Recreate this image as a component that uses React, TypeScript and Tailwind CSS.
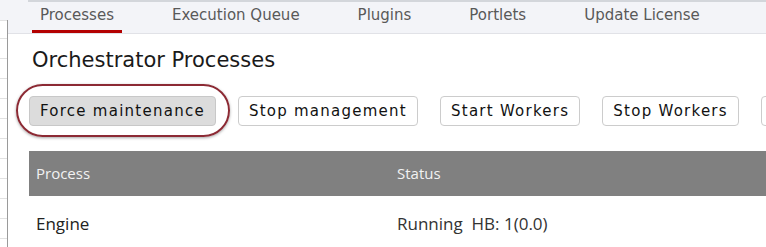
import React from "react";

const tabs = ["Processes", "Execution Queue", "Plugins", "Portlets", "Update License"];
const buttons = ["Force maintenance", "Stop management", "Start Workers", "Stop Workers"];

export default function App() {
  return (
    <div className="relative w-[766px] h-[247px] overflow-hidden bg-white flex" style={{ fontFamily: '"DejaVu Sans", Verdana, sans-serif' }}>
      {/* left strip */}
      <div className="w-[8px] shrink-0 flex flex-col">
        <div className="h-[20px] bg-[#f3f4f8] shrink-0" />
        <div className="flex-1 bg-white border-r border-[#9a9a9a] flex flex-col">
          <div className="h-[18px] border-t border-[#e2e2e2] shrink-0" />
          {Array.from({ length: 11 }).map((_, i) => (
            <div key={i} className="h-[20px] border-t border-[#e2e2e2] shrink-0" />
          ))}
        </div>
      </div>

      {/* main */}
      <div className="flex-1 min-w-0 flex flex-col">
        <div className="bg-[#f3f4f8] border-b border-[#e1e2e7]">
          <div className="ml-[20px] h-[2px] bg-[#d3d6db]" />
          <div className="flex pl-[24px] gap-[42px] h-[31px]">
            {tabs.map((t, i) => (
              <div
                key={t}
                className={
                  "px-[8px] flex items-center text-[15px] text-[#595959] whitespace-nowrap border-b-[3px] pb-[1px] " +
                  (i === 0 ? "border-[#b30000]" : "border-transparent")
                }
              >
                {t}
              </div>
            ))}
          </div>
        </div>

        <div className="pl-[21px] flex flex-col">
          <h1 className="ml-[3px] mt-[14px] text-[21px] leading-[24px] text-[#1a1a1a] whitespace-nowrap">
            Orchestrator Processes
          </h1>

          <div className="flex gap-[22px] mt-[24px]">
            {buttons.map((b, i) => (
              <button
                key={b}
                className={
                  "shrink-0 h-[30px] px-[10px] border rounded-[4px] text-[15px] tracking-[1.25px] text-[#111] whitespace-nowrap " +
                  (i === 0 ? "bg-[#dcdcdc] border-[#c8c8c8]" : "bg-white border-[#cccccc]")
                }
                style={{ fontFamily: '"DejaVu Sans", Verdana, sans-serif' }}
              >
                {b}
              </button>
            ))}
            <div className="shrink-0 w-[100px] h-[30px] border border-[#cccccc] rounded-[4px] bg-white" />
          </div>

          <div className="mt-[25px] w-[745px]" style={{ fontFamily: '"Open Sans", "Noto Sans", sans-serif' }}>
            <div className="h-[45px] bg-[#808080] flex items-center text-[15px] text-[#f2f2f2]">
              <div className="w-[361px] px-[7px]">Process</div>
              <div className="px-[7px]">Status</div>
            </div>
            <div className="flex pt-[16px] text-[17px] leading-[24px] text-[#222]">
              <div className="w-[361px] px-[7px]">Engine</div>
              <div className="px-[7px] whitespace-pre text-[#333]">Running  HB: 1(0.0)</div>
            </div>
          </div>
        </div>
      </div>

      {/* annotation highlight */}
      <div className="absolute left-[16px] top-[84px] w-[214px] h-[53px] rounded-full border-2 border-[#8c2a34] shadow-[0_1px_3px_rgba(0,0,0,0.35)] pointer-events-none" />
    </div>
  );
}
